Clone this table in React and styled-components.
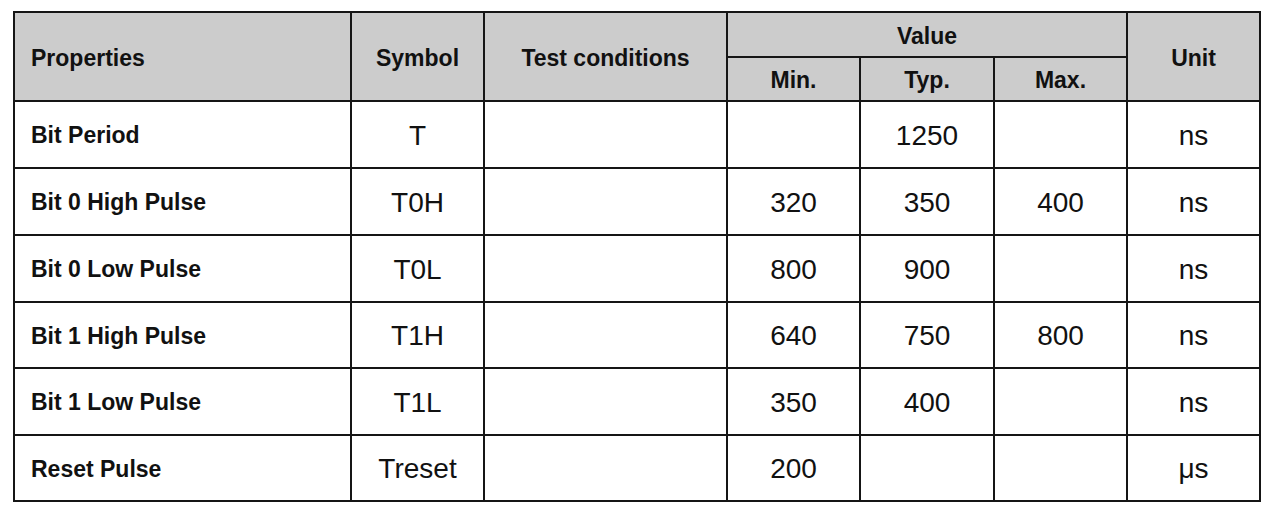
import React from 'react';
import styled, { createGlobalStyle } from 'styled-components';

const GlobalStyle = createGlobalStyle`
  html, body {
    margin: 0;
    padding: 0;
    background: #ffffff;
  }
  body {
    font-family: "Liberation Sans", Arial, sans-serif;
    color: #111111;
  }
`;

const Page = styled.div`
  width: 1280px;
  height: 521px;
  box-sizing: border-box;
  padding: 11px 0 0 13px;
`;

const Table = styled.table`
  width: 1246px;
  border-collapse: collapse;
  table-layout: fixed;
  border: 2px solid #151515;
`;

const HeadCell = styled.th`
  background: #cccccc;
  border: 2px solid #151515;
  font-size: 23px;
  font-weight: 700;
  color: #111111;
  text-align: ${({ $left }) => ($left ? 'left' : 'center')};
  padding: ${({ $left }) => ($left ? '3px 0 0 16px' : '3px 0 0')};
  vertical-align: middle;
`;

const HeadRow = styled.tr`
  height: ${({ $h }) => $h}px;
`;

const BodyRow = styled.tr`
  height: ${({ $h }) => $h}px;
`;

const NameCell = styled.td`
  border: 2px solid #151515;
  font-size: 23px;
  font-weight: 700;
  padding: 2px 0 0 16px;
  vertical-align: middle;
`;

const ValueCell = styled.td`
  border: 2px solid #151515;
  font-size: 28px;
  font-weight: 400;
  text-align: center;
  padding: 2px 0 0;
  vertical-align: middle;
`;

const widths = [337, 133, 243, 133, 134, 133, 133];

const rows = [
  { name: 'Bit Period', sym: 'T', min: '', typ: '1250', max: '', unit: 'ns', h: 67 },
  { name: 'Bit 0 High Pulse', sym: 'T0H', min: '320', typ: '350', max: '400', unit: 'ns', h: 67 },
  { name: 'Bit 0 Low Pulse', sym: 'T0L', min: '800', typ: '900', max: '', unit: 'ns', h: 67 },
  { name: 'Bit 1 High Pulse', sym: 'T1H', min: '640', typ: '750', max: '800', unit: 'ns', h: 66 },
  { name: 'Bit 1 Low Pulse', sym: 'T1L', min: '350', typ: '400', max: '', unit: 'ns', h: 67 },
  { name: 'Reset Pulse', sym: 'Treset', min: '200', typ: '', max: '', unit: 'μs', h: 66 },
];

export default function App() {
  return (
    <>
      <GlobalStyle />
      <Page>
        <Table>
          <colgroup>
            {widths.map((w, i) => (
              <col key={i} style={{ width: w }} />
            ))}
          </colgroup>
          <thead>
            <HeadRow $h={45}>
              <HeadCell rowSpan={2} $left>Properties</HeadCell>
              <HeadCell rowSpan={2}>Symbol</HeadCell>
              <HeadCell rowSpan={2}>Test conditions</HeadCell>
              <HeadCell colSpan={3}>Value</HeadCell>
              <HeadCell rowSpan={2}>Unit</HeadCell>
            </HeadRow>
            <HeadRow $h={44}>
              <HeadCell>Min.</HeadCell>
              <HeadCell>Typ.</HeadCell>
              <HeadCell>Max.</HeadCell>
            </HeadRow>
          </thead>
          <tbody>
            {rows.map((r) => (
              <BodyRow key={r.name} $h={r.h}>
                <NameCell>{r.name}</NameCell>
                <ValueCell>{r.sym}</ValueCell>
                <ValueCell />
                <ValueCell>{r.min}</ValueCell>
                <ValueCell>{r.typ}</ValueCell>
                <ValueCell>{r.max}</ValueCell>
                <ValueCell>{r.unit}</ValueCell>
              </BodyRow>
            ))}
          </tbody>
        </Table>
      </Page>
    </>
  );
}
